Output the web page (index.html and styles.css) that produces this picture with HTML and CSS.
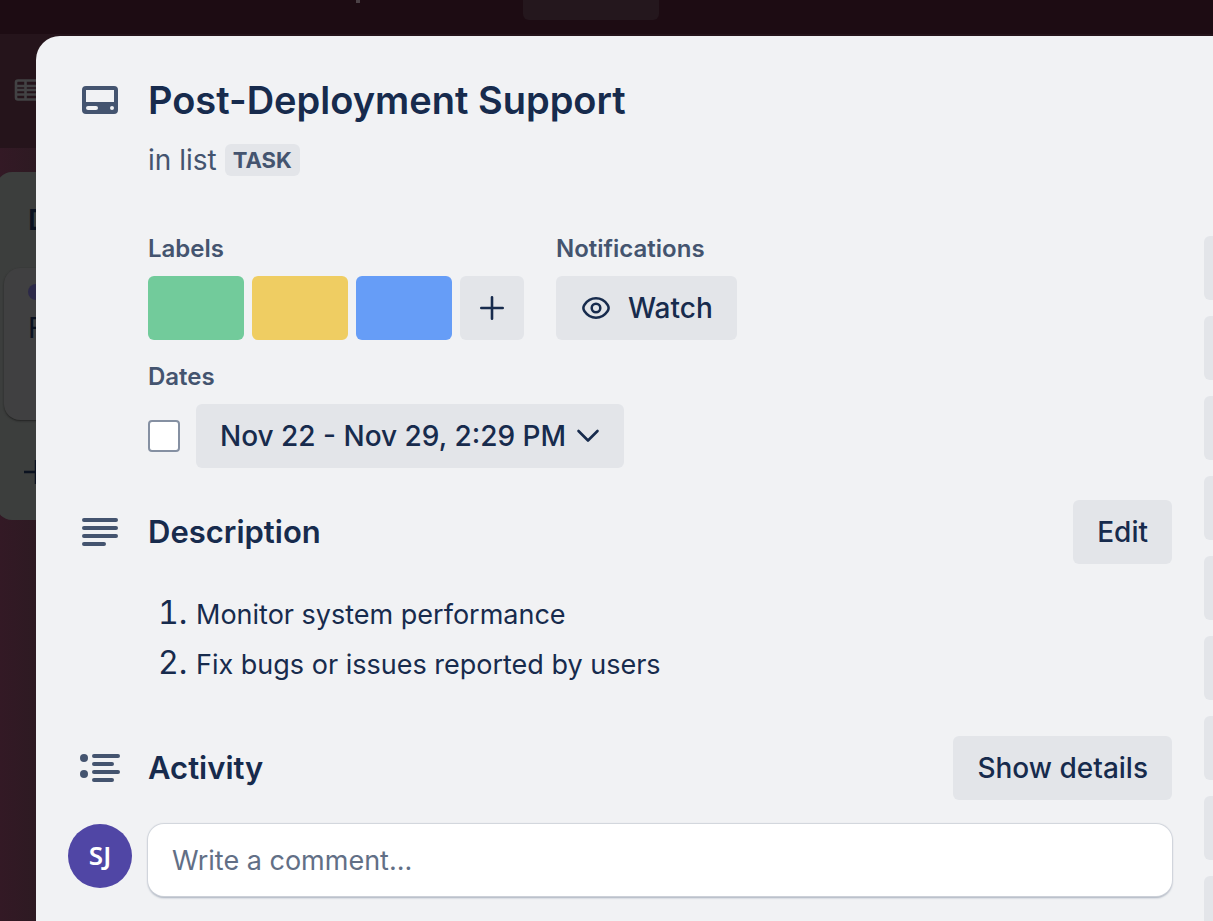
FILE: index.html
```html
<!DOCTYPE html>
<html lang="en">
<head>
<meta charset="utf-8">
<meta name="viewport" content="width=device-width, initial-scale=1">
<title>Post-Deployment Support</title>
<link rel="stylesheet" href="styles.css">
</head>
<body>
<div class="board">
  <div class="topbar"><span class="topbar-item"></span><span class="topbar-create"></span></div>
  <div class="board-header">
    <svg class="table-icon" width="28" height="24" viewBox="0 0 28 24" fill="none" stroke="currentColor" stroke-width="2.600"><rect x="2" y="2.500" width="24" height="19" rx="2"/><path d="M2 8h24M2 12h24M2 16.500h24M11.500 2v19"/></svg>
  </div>
  <div class="board-list">
    <div class="list-name">D</div>
    <div class="list-card"><span class="card-label"></span><span class="card-name">F</span></div>
    <svg class="list-add" width="24" height="24" viewBox="0 0 24 24" fill="none" stroke="currentColor" stroke-width="2.500"><path d="M0 12h24M12 0v24"/></svg>
  </div>
</div>

<main class="dialog">
  <div class="details">
    <header class="row">
      <div class="gutter">
        <svg class="icon" width="36" height="28" viewBox="0 0 36 28"><path fill="currentColor" fill-rule="evenodd" d="M4 0h28a4 4 0 0 1 4 4v20a4 4 0 0 1-4 4H4a4 4 0 0 1-4-4V4a4 4 0 0 1 4-4ZM4 4v12h28V4ZM6 20a2 2 0 0 0 0 4h8a2 2 0 0 0 0-4ZM30 20a2 2 0 1 0 0 4a2 2 0 0 0 0-4Z"/></svg>
      </div>
      <h1 class="title">Post-Deployment Support</h1>
    </header>
    <p class="in-list indent">in list <a class="list-link" href="#">TASK</a></p>

    <div class="meta indent">
      <section>
        <h2 class="label">Labels</h2>
        <div class="chips">
          <button class="chip green" aria-label="Green label"></button>
          <button class="chip yellow" aria-label="Yellow label"></button>
          <button class="chip blue" aria-label="Blue label"></button>
          <button class="button add" aria-label="Add label"><svg width="24" height="24" viewBox="0 0 24 24" fill="none" stroke="currentColor" stroke-width="2.600" stroke-linecap="round"><path d="M1.300 12h21.400M12 1.300v21.400"/></svg></button>
        </div>
      </section>
      <section>
        <h2 class="label">Notifications</h2>
        <button class="button watch"><svg width="28" height="22" viewBox="0 0 28 22" fill="none" stroke="currentColor" stroke-width="2.500"><path d="M14 1.300C9.500 1.300 5.300 3.600 2.500 7.700C1 9.900 1 12.100 2.500 14.300C5.300 18.400 9.500 20.700 14 20.700S22.700 18.400 25.500 14.300C27 12.100 27 9.900 25.500 7.700C22.700 3.600 18.500 1.300 14 1.300Z"/><circle cx="14" cy="11" r="4.300"/></svg>Watch</button>
      </section>
    </div>
    <section class="dates indent">
      <h2 class="label">Dates</h2>
      <div class="date-row">
        <input class="check" type="checkbox" aria-label="Mark due date complete">
        <button class="button date">Nov 22 - Nov 29, 2:29 PM<svg width="24" height="16" viewBox="0 0 24 16" fill="none" stroke="currentColor" stroke-width="2.600" stroke-linecap="round" stroke-linejoin="round"><path d="M2.500 3L12 12.500L21.500 3"/></svg></button>
      </div>
    </section>

    <section class="description">
      <div class="row">
        <div class="gutter"><svg class="icon" width="36" height="28" viewBox="0 0 36 28" fill="none" stroke="currentColor" stroke-width="4" stroke-linecap="round"><path d="M2 2h32M2 10h32M2 18h32M2 26h20"/></svg></div>
        <h2 class="heading">Description</h2>
        <button class="button">Edit</button>
      </div>
      <ol class="steps indent">
        <li><span>Monitor system performance</span></li>
        <li><span>Fix bugs or issues reported by users</span></li>
      </ol>
    </section>

    <section class="activity">
      <div class="row">
        <div class="gutter"><svg class="icon" width="40" height="28" viewBox="0 0 40 28" fill="none" stroke="currentColor" stroke-width="4" stroke-linecap="round"><path d="M14 2h24M14 10h18M14 18h24M14 26h18"/><g fill="currentColor" stroke="none"><circle cx="4" cy="4" r="4"/><circle cx="4" cy="20" r="4"/></g></svg></div>
        <h2 class="heading">Activity</h2>
        <button class="button">Show details</button>
      </div>
      <div class="comment-row">
        <span class="avatar">SJ</span>
        <input class="comment" type="text" placeholder="Write a comment..." aria-label="Write a comment">
      </div>
    </section>
  </div>
  <aside class="actions">
    <span class="action"></span><span class="action"></span><span class="action"></span><span class="action"></span><span class="action"></span><span class="action"></span><span class="action"></span><span class="action"></span><span class="action"></span>
  </aside>
</main>
</body>
</html>
```
FILE: styles.css
```css
* { box-sizing: border-box; }
body {
  margin: 0;
  height: 100vh;
  overflow: hidden;
  background: linear-gradient(90deg, #331925, #2d1a22 40px);
  color: #172b4d;
  font-family: Inter, "Liberation Sans", sans-serif;
  font-size: 28px;
}
h1, h2, p, ol { margin: 0; padding: 0; }
svg { display: block; flex: none; }

.board { color: #0b1220; }
.topbar {
  display: flex;
  align-items: flex-start;
  height: 34px;
  padding-left: 356px;
  background: #1d0c13;
}
.topbar-item { width: 4px; height: 3px; background: #4c4247; }
.topbar-create {
  width: 136px;
  height: 20px;
  margin-left: 163px;
  border-radius: 0 0 6px 6px;
  background: #24171d;
}
.board-header {
  height: 114px;
  padding: 44px 14px;
  background: #25141b;
}
.table-icon { color: #424244; }
.board-list {
  width: 544px;
  height: 348px;
  margin: 24px 0 0 -4px;
  padding: 32px 8px;
  border-radius: 16px;
  background: #3c3e3d;
}
.list-name {
  padding-left: 24px;
  font-weight: 600;
  line-height: 32px;
}
.list-card {
  display: flex;
  flex-direction: column;
  gap: 12px;
  height: 152px;
  margin-top: 32px;
  padding: 16px 24px;
  border-radius: 16px;
  background: #404041;
  box-shadow: 0 1px 2px #222;
}
.card-label { width: 80px; height: 16px; border-radius: 8px; background: #2c2948; }
.card-name { line-height: 32px; }
.list-add { margin: 40px 0 0 20px; }

.dialog {
  position: absolute;
  inset: 36px 0 0 36px;
  display: grid;
  grid-template-columns: 1fr 9px;
  gap: 32px;
  padding: 36px 0 0 32px;
  overflow: hidden;
  border-radius: 24px 0 0 0;
  background: #f1f2f4;
}
.row { display: flex; align-items: center; }
.gutter {
  display: flex;
  justify-content: center;
  width: 64px;
  margin-right: 16px;
}
.icon { color: #44546f; }
.indent { margin-left: 80px; }
.title { font-size: 38px; font-weight: 600; line-height: 56px; }
.in-list {
  display: flex;
  align-items: center;
  gap: 8px;
  margin-top: 16px;
  color: #44546f;
  line-height: 32px;
}
.list-link {
  padding: 0 8px;
  border-radius: 6px;
  background: #e3e5e9;
  color: #44546f;
  font-size: 22px;
  font-weight: 700;
  text-decoration: none;
}
.meta { display: flex; gap: 32px; margin-top: 60px; }
.label {
  margin-bottom: 14px;
  color: #44546f;
  font-size: 24px;
  font-weight: 600;
  line-height: 26px;
}
.chips { display: flex; gap: 8px; }
.chip { width: 96px; height: 64px; padding: 0; border: 0; border-radius: 6px; }
.green { background: #72cb9b; }
.yellow { background: #efcd62; }
.blue { background: #669df7; }
.button {
  display: flex;
  align-items: center;
  justify-content: center;
  height: 64px;
  padding: 0 24px;
  border: 0;
  border-radius: 6px;
  background: #e3e5e9;
  color: #172b4d;
  font: inherit;
  font-weight: 500;
  white-space: nowrap;
}
.add { width: 64px; padding: 0; }
.watch { gap: 18px; padding-left: 26px; }
.dates { margin-top: 24px; }
.date-row { display: flex; align-items: center; gap: 16px; }
.check {
  appearance: none;
  width: 32px;
  height: 32px;
  margin: 0;
  border: 2px solid #8590a2;
  border-radius: 4px;
  background: #fff;
}
.date { gap: 10px; }
.description { margin-top: 32px; }
.heading { flex: 1; font-size: 31px; font-weight: 600; line-height: 40px; }
.steps {
  margin-top: 24px;
  padding-left: 48px;
  font-size: 32px;
  line-height: 50px;
}
.steps span { font-size: 27px; line-height: 27px; }
.activity { margin-top: 48px; }
.comment-row { display: flex; gap: 16px; margin-top: 24px; }
.avatar {
  width: 64px;
  height: 64px;
  border-radius: 50%;
  background: #5046a5;
  color: #fff;
  font-family: "Noto Sans", sans-serif;
  font-size: 26px;
  font-weight: 600;
  line-height: 62px;
  text-align: center;
}
.comment {
  flex: 1;
  min-width: 0;
  height: 72px;
  padding: 0 24px;
  border: 0;
  border-radius: 16px;
  background: #fff;
  box-shadow: 0 0 1px 1px #d0d4db, 0 2px 2px #a5adba;
  color: #172b4d;
  font: inherit;
  font-size: 27px;
}
.comment::placeholder { color: #626f86; opacity: 1; }
.actions { display: flex; flex-direction: column; gap: 16px; padding-top: 164px; }
.action { flex: none; height: 64px; border-radius: 6px 0 0 6px; background: #e3e5e9; }
```
